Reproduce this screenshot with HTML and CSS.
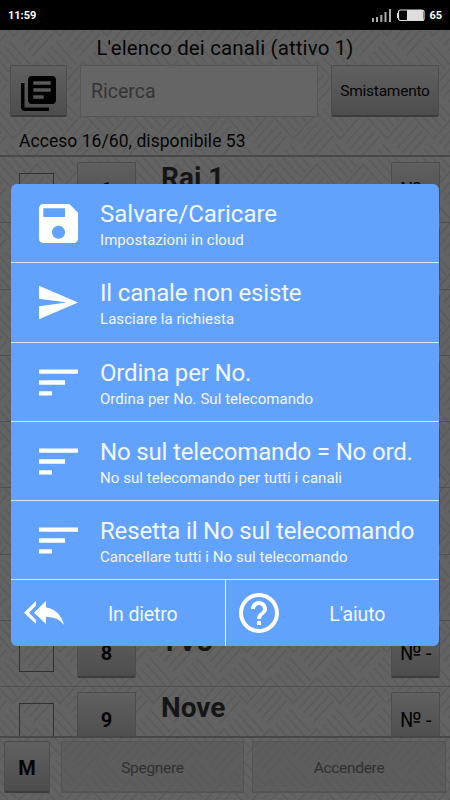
FILE: index.html
```html
<!DOCTYPE html>
<html lang="it">
<head>
<meta charset="utf-8">
<title>L'elenco dei canali</title>
<link rel="stylesheet" href="styles.css">
</head>
<body>
<div class="screen">
<header class="status"><span>11:59</span>
<div class="status-right">
<svg width="20" height="14" viewBox="0 0 20 14"><path fill="#aaa" d="M0 10h2v4H0zM4 9h2v5H4zM8.300 7h2v7h-2zM12.500 4h2v10h-2zM17 1h2v13h-2z"/></svg>
<svg class="battery" width="28" height="13" viewBox="0 0 28 13"><rect x="1.500" y="1" width="25.500" height="10.500" rx="2" fill="#000" stroke="#ddd" stroke-width="1.200"/><path fill="#ddd" d="M0 4h2v5H0zM10 1h16v10H10z"/></svg>
<span>65</span></div></header>
<main class="app">
<svg class="weave" width="450" height="770"><defs><pattern id="weave" width="66" height="66" patternUnits="userSpaceOnUse" patternTransform="translate(12 6) scale(1 1.1) rotate(-45)">
<path stroke="#5a5a5a" stroke-width="1.600" fill="none" d="M0 1H33M2 8H31M2 14.500H31M2 21H31M2 27.500H31M33 34H66M35 41H64M35 47.500H64M35 54H64M35 60.500H64M34 0V33M41 2V31M47.500 2V31M54 2V31M60.500 2V31M1 33V66M8 35V64M14.500 35V64M21 35V64M27.500 35V64"/></pattern></defs><rect width="450" height="770" fill="url(#weave)"/></svg>
<h1 class="title"><span>L'elenco dei canali (attivo 1)</span></h1>
<div class="tools">
<div class="btn library"><svg width="35" height="35" viewBox="2 2 20 20"><path d="M4 6H2v14c0 1.100.9 2 2 2h14v-2H4V6zm16-4H8c-1.100 0-2 .9-2 2v12c0 1.100.9 2 2 2h12c1.100 0 2-.9 2-2V4c0-1.100-.9-2-2-2zm-1 9H9V9h10v2zm-4 4H9v-2h6v2zm4-8H9V5h10v2z"/></svg></div>
<div class="search">Ricerca</div>
<div class="btn sort">Smistamento</div>
</div>
<div class="count"><span>Acceso 16/60, disponibile 53</span></div>
<div class="list">
<div class="row"><i class="check"></i><b class="btn num">1</b><strong class="name">Rai 1</strong><span class="btn no">№ -</span></div>
<div class="row"><i class="check"></i><b class="btn num"></b><strong class="name"></strong><span class="btn no"></span></div>
<div class="row"><i class="check"></i><b class="btn num"></b><strong class="name"></strong><span class="btn no"></span></div>
<div class="row"><i class="check"></i><b class="btn num"></b><strong class="name"></strong><span class="btn no"></span></div>
<div class="row"><i class="check"></i><b class="btn num"></b><strong class="name"></strong><span class="btn no"></span></div>
<div class="row"><i class="check"></i><b class="btn num"></b><strong class="name"></strong><span class="btn no"></span></div>
<div class="row"><i class="check"></i><b class="btn num"></b><strong class="name"></strong><span class="btn no"></span></div>
<div class="row"><i class="check"></i><b class="btn num">8</b><strong class="name">TV8</strong><span class="btn no">№ -</span></div>
<div class="row"><i class="check"></i><b class="btn num">9</b><strong class="name">Nove</strong><span class="btn no">№ -</span></div>
</div>
<footer class="bar"><b class="btn">M</b><div class="off"><span>Spegnere</span></div><div class="off wide"><span>Accendere</span></div></footer>
</main>
<section class="menu">
<div class="item"><svg class="ic" viewBox="3 3 18 18"><path d="M17 3H5c-1.100 0-2 .9-2 2v14c0 1.100.9 2 2 2h14c1.100 0 2-.9 2-2V7l-4-4zm-5 16c-1.660 0-3-1.340-3-3s1.340-3 3-3 3 1.340 3 3-1.340 3-3 3zm3-10H5V5h10v4z"/></svg><div><h2 class="loose">Salvare/Caricare</h2><p>Impostazioni in cloud</p></div></div>
<div class="item"><svg class="ic" viewBox="2 1.500 21 21"><path d="M2.010 21L23 12 2.010 3 2 10l15 2-15 2z"/></svg><div><h2>Il canale non esiste</h2><p>Lasciare la richiesta</p></div></div>
<div class="item"><svg class="ic" viewBox="3 3 18 18"><path d="M3 18h6v-2H3v2zM3 6v2h18V6H3zm0 7h12v-2H3v2z"/></svg><div><h2>Ordina per No.</h2><p>Ordina per No. Sul telecomando</p></div></div>
<div class="item"><svg class="ic" viewBox="3 3 18 18"><path d="M3 18h6v-2H3v2zM3 6v2h18V6H3zm0 7h12v-2H3v2z"/></svg><div><h2>No sul telecomando = No ord.</h2><p>No sul telecomando per tutti i canali</p></div></div>
<div class="item"><svg class="ic" viewBox="3 3 18 18"><path d="M3 18h6v-2H3v2zM3 6v2h18V6H3zm0 7h12v-2H3v2z"/></svg><div><h2>Resetta il No sul telecomando</h2><p>Cancellare tutti i No sul telecomando</p></div></div>
<div class="actions"><div class="action"><svg width="40" height="24" viewBox="0 0 40 24"><path d="M12 0v4.500L5 11.700l7 7.200V23L0 11.700zM22 0v6.500c10 1.500 15.500 8 18 17.500-4.500-6-10-8-18-8v7L10 11.700z"/></svg><span>In dietro</span></div>
<div class="action help"><svg width="40" height="40" viewBox="2 2 20 20"><path d="M11 18h2v-2h-2v2zm1-16C6.480 2 2 6.480 2 12s4.480 10 10 10 10-4.480 10-10S17.520 2 12 2zm0 18c-4.410 0-8-3.590-8-8s3.590-8 8-8 8 3.590 8 8-3.590 8-8 8zm0-14c-2.210 0-4 1.790-4 4h2c0-1.100.9-2 2-2s2 .9 2 2c0 2-3 1.750-3 5h2c0-2.250 3-2.500 3-5 0-2.210-1.790-4-4-4z"/></svg><span>L'aiuto</span></div></div>
</section>
</div>
</body>
</html>
```
FILE: styles.css
```css
*{box-sizing:border-box}
body,h1,h2,p{margin:0}
body{font-family:Roboto,"Noto Sans",sans-serif;background:#626262;color:#050505}
svg{display:block;flex:none}
.screen{position:relative;width:450px;height:800px;overflow:hidden;display:flex;flex-direction:column}
.status{height:30px;flex:none;background:#000;color:#fff;display:flex;align-items:center;justify-content:space-between;padding:0 8px;font-size:11px;font-weight:700}
.status-right{display:flex;align-items:center;gap:5px}
.battery{margin-right:-1px}
.app{position:relative;flex:1;display:flex;flex-direction:column;background:#636363;min-height:0}
.weave{position:absolute;left:0;top:0}
.app>:not(.weave){position:relative}
.title{height:35px;flex:none;text-align:center;font-weight:400;font-size:20.500px;letter-spacing:.13px;line-height:36px}
.tools{display:flex;height:52px;flex:none;padding:0 11px 0 10px}
.btn{background:linear-gradient(#606060,#4d4d4d);border:1px solid #4c4c4c;border-bottom:2px solid #3c3c3c;border-radius:2px;display:flex;align-items:center;justify-content:center}
.library{width:57px;margin-right:13px}
.library svg{margin-top:5px}
.search{flex:1;margin-right:13px;background:#656565;border:1px solid #555;color:#353535;font-size:19.500px;line-height:51px;padding-left:10px}
.sort{width:108px;font-size:15.500px;letter-spacing:-.25px;padding-top:1px}
.count{height:40px;flex:none;border-bottom:2px solid #484848;padding-left:19px;font-size:17.500px;letter-spacing:.05px;line-height:49px}
.list{height:581px;overflow:hidden;flex:none;border-bottom:2px solid #484848}
.row{height:66.250px;display:flex;align-items:flex-start;padding:5px 10px 0 19px;border-bottom:1px solid #505050}
.check{width:35px;height:35px;margin-top:11px;margin-right:23px;border:1px solid #303030}
.num{width:59px;height:52px;font-size:20px;margin-right:25px;padding-top:4px}
.name{flex:1;font-size:28px;line-height:32px;color:#161616}
.no{width:49px;height:52px;font-size:21px;letter-spacing:-.4px;padding-top:4px}
.bar{display:flex;padding:3px 4px 0 4px}
.bar .btn{width:46px;height:52px;font-size:20px;margin-right:11px;padding-top:2px}
.off{width:183px;height:52px;border:1px solid #545454;border-bottom-width:2px;background:rgba(88,88,88,.5);display:flex;align-items:center;justify-content:center;font-size:15.500px;letter-spacing:-.3px;padding-top:2px;color:#303030;margin-right:8px}
.wide{width:194px;margin-right:0}
.menu{position:absolute;left:11px;top:184px;width:428px;height:462px;border-radius:6px;background:#62a2ff;color:#f3f6ff;fill:#fff;overflow:hidden;display:flex;flex-direction:column}
.item{height:79.300px;flex:none;display:flex;padding-left:28px;border-bottom:1.500px solid #d8e7ff}
.ic{width:39px;height:39px;margin:20px 22px 0 0}
.item h2{font-size:24px;letter-spacing:-.17px;line-height:28px;font-weight:400;padding-top:16px;white-space:nowrap}
.item .loose{letter-spacing:0}
.item p{font-size:15px;letter-spacing:.05px;line-height:18px;margin-top:3px;white-space:nowrap}
.actions{flex:1;display:flex;font-size:19.500px;letter-spacing:-.15px}
.action{flex:1;display:flex;align-items:center;padding-left:13px}
.action span{flex:1;text-align:center;padding:2px 3px 0 0}
.help{border-left:1px solid #eaf2ff}
```
